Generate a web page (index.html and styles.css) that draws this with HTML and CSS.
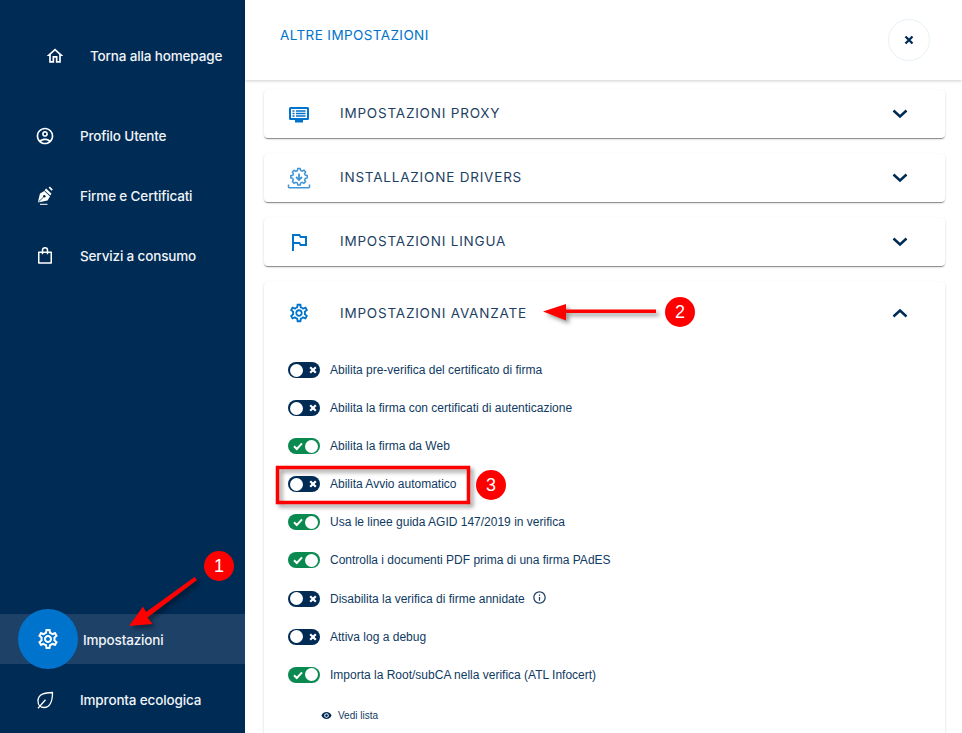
FILE: index.html
```html
<!DOCTYPE html>
<html lang="it">
<head>
<meta charset="utf-8">
<title>Altre impostazioni</title>
<link rel="stylesheet" href="styles.css">
</head>
<body>
<svg class="defs" aria-hidden="true">
  <defs>
    <symbol id="gear" viewBox="0 0 24 24"><path d="M19.43 12.98c.04-.32.07-.64.07-.98 0-.34-.03-.66-.07-.98l2.11-1.65c.19-.15.24-.42.12-.64l-2-3.46c-.09-.16-.26-.25-.44-.25-.06 0-.12.01-.17.03l-2.49 1c-.52-.4-1.08-.73-1.69-.98l-.38-2.65C14.46 2.18 14.25 2 14 2h-4c-.25 0-.46.18-.49.42l-.38 2.65c-.61.25-1.17.59-1.69.98l-2.49-1c-.06-.02-.12-.03-.18-.03-.17 0-.34.09-.43.25l-2 3.46c-.13.22-.07.49.12.64l2.11 1.65c-.04.32-.07.65-.07.98 0 .33.03.66.07.98l-2.11 1.65c-.19.15-.24.42-.12.64l2 3.46c.09.16.26.25.44.25.06 0 .12-.01.17-.03l2.49-1c.52.4 1.08.73 1.69.98l.38 2.65c.03.24.24.42.49.42h4c.25 0 .46-.18.49-.42l.38-2.65c.61-.25 1.17-.59 1.69-.98l2.49 1c.06.02.12.03.18.03.17 0 .34-.09.43-.25l2-3.46c.12-.22.07-.49-.12-.64l-2.11-1.65zm-1.98-1.71c.04.31.05.52.05.73 0 .21-.02.43-.05.73l-.14 1.13.89.7 1.08.84-.7 1.21-1.27-.51-1.04-.42-.9.68c-.43.32-.84.56-1.25.73l-1.06.43-.16 1.13-.2 1.35h-1.4l-.19-1.35-.16-1.13-1.06-.43c-.43-.18-.83-.41-1.23-.71l-.91-.7-1.06.43-1.27.51-.7-1.21 1.08-.84.89-.7-.14-1.13c-.03-.31-.05-.54-.05-.74s.02-.43.05-.73l.14-1.13-.89-.7-1.08-.84.7-1.21 1.27.51 1.04.42.9-.68c.43-.32.84-.56 1.25-.73l1.06-.43.16-1.13.2-1.35h1.39l.19 1.35.16 1.13 1.06.43c.43.18.83.41 1.23.71l.91.7 1.06-.43 1.27-.51.7 1.21-1.07.85-.89.7.14 1.13zM12 8c-2.21 0-4 1.79-4 4s1.79 4 4 4 4-1.79 4-4-1.79-4-4-4zm0 6c-1.1 0-2-.9-2-2s.9-2 2-2 2 .9 2 2-.9 2-2 2z"/></symbol>
    <symbol id="chev" viewBox="0 0 16 16"><path d="M1.500 4.500 8 10.500 14.500 4.500" fill="none" stroke="currentColor" stroke-width="2.500"/></symbol>
    <symbol id="off" viewBox="0 0 10 10"><path d="M2.200 2.200 7.800 7.800M7.800 2.200 2.200 7.800" fill="none" stroke="#fff" stroke-width="2.200"/></symbol>
    <symbol id="on" viewBox="0 0 10 10"><path d="M1 5.200 3.800 8 9 2.400" fill="none" stroke="#fff" stroke-width="2"/></symbol>
  </defs>
</svg>

<div class="app">
  <aside class="sidebar">
    <a class="home-row">
      <svg class="side-icon" viewBox="0 0 24 24"><path d="M12 5.690l5 4.500V18h-2v-6H9v6H7v-7.810l5-4.500M12 3L2 12h3v8h6v-6h2v6h6v-8h3L12 3z"/></svg>
      <span>Torna alla homepage</span>
    </a>
    <nav class="side-nav">
      <a class="side-row">
        <svg class="side-icon" viewBox="0 0 24 24"><path d="M12 2C6.480 2 2 6.480 2 12s4.480 10 10 10 10-4.480 10-10S17.520 2 12 2zM7.350 18.500C8.660 17.560 10.260 17 12 17s3.340.56 4.650 1.500c-1.310.94-2.910 1.500-4.650 1.500s-3.340-.56-4.650-1.500zm10.790-1.380C16.450 15.800 14.320 15 12 15s-4.450.8-6.140 2.120C4.700 15.730 4 13.950 4 12c0-4.420 3.580-8 8-8s8 3.580 8 8c0 1.950-.7 3.730-1.860 5.120zM12 6c-1.930 0-3.500 1.570-3.500 3.500S10.070 13 12 13s3.500-1.570 3.500-3.500S13.930 6 12 6zm0 5c-.83 0-1.500-.67-1.500-1.500S11.170 8 12 8s1.500.67 1.500 1.500S12.830 11 12 11z"/></svg>
        <span>Profilo Utente</span>
      </a>
      <a class="side-row">
        <svg class="side-icon" viewBox="0 0 20 20"><path d="M2.800 16.600 5 7.500 9.300 5 15 10.600 12.500 14.600z"/><path d="M9.500 4.200 11.200 2.500 16.500 7.800 15.300 9.600z"/><circle cx="9.300" cy="10.200" r="1.300" fill="#002b55"/><path d="M3.400 16 8.600 11" fill="none" stroke="#002b55" stroke-width=".8"/><path d="M14.200 1.200 17.200 4.200" fill="none" stroke="#fff" stroke-width="1.700"/><path d="M5 18.300h7.500" fill="none" stroke="#fff" stroke-width="1"/></svg>
        <span>Firme e Certificati</span>
      </a>
      <a class="side-row">
        <svg class="side-icon" viewBox="0 0 24 24"><path d="M4.500 7.500h15v13h-15zM9 10V5a3 3 0 0 1 6 0v5" fill="none" stroke="#fff" stroke-width="1.800" stroke-linejoin="round"/></svg>
        <span>Servizi a consumo</span>
      </a>
    </nav>
    <div class="side-bottom">
      <a class="side-row active-row">
        <span class="active-disc"><svg class="active-gear"><use href="#gear"/></svg></span>
        <span class="active-label">Impostazioni</span>
      </a>
      <a class="side-row">
        <svg class="side-icon" viewBox="0 0 20 20"><path d="M17.500 2.500C10 2.500 3 4 3 11c0 4 2.500 6.500 6 6.500 6 0 8.500-6.500 8.500-15zM3 18.200 10.500 9.800" fill="none" stroke="#fff" stroke-width="1.300" stroke-linejoin="round"/></svg>
        <span>Impronta ecologica</span>
      </a>
    </div>
  </aside>

  <main class="main">
    <header class="top-bar">
      <h1 class="page-title">ALTRE IMPOSTAZIONI</h1>
      <button class="close-btn" aria-label="Chiudi">
        <svg class="close-icon" viewBox="0 0 10 10"><path d="M1.500 1.500 8.500 8.500M8.500 1.500 1.500 8.500" fill="none" stroke="currentColor" stroke-width="2.300"/></svg>
      </button>
    </header>

    <div class="content">
      <section class="card">
        <div class="card-head">
          <svg class="card-icon" viewBox="0 0 24 24"><path d="M3.500 5h17A1.500 1.500 0 0 1 22 6.500v10a1.500 1.500 0 0 1-1.500 1.500h-17A1.500 1.500 0 0 1 2 16.500v-10A1.500 1.500 0 0 1 3.500 5zM4 7v9h16V7z" fill-rule="evenodd"/><path d="M5.500 8.300h2v1.400h-2zM9 8.300h9.500v1.400H9zM5.500 10.800h2v1.400h-2zM9 10.800h9.500v1.400H9zM5.500 13.300h2v1.400h-2zM9 13.300h9.500v1.400H9zM8 18h8v2.600H8z"/></svg>
          <h2 class="card-title">IMPOSTAZIONI PROXY</h2>
          <svg class="chevron"><use href="#chev"/></svg>
        </div>
      </section>
      <section class="card">
        <div class="card-head">
          <svg class="card-icon card-icon-soft" viewBox="0 0 24 24"><path d="M10.800 2.500h2.400l.4 1.900 1.600.7 1.700-1 1.700 1.700-1 1.700.7 1.600 1.900.4v2.400l-1.900.4-.7 1.600 1 1.700-1.700 1.700-1.700-1-1.600.7-.4 1.900h-2.400l-.4-1.900-1.600-.7-1.700 1-1.700-1.700 1-1.700-.7-1.600-1.900-.4V9.700l1.900-.4.7-1.600-1-1.700 1.700-1.700 1.700 1 1.600-.7z" fill="none" stroke="currentColor" stroke-width="1.500"/><path d="M12 7.500v6M9 11l3 3 3-3" fill="none" stroke="currentColor" stroke-width="1.800"/><path d="M1.500 18.500v2.500a.8.8 0 0 0 .8.8h19.400a.8.8 0 0 0 .8-.8v-2.500" fill="none" stroke="currentColor" stroke-width="1.500"/></svg>
          <h2 class="card-title">INSTALLAZIONE DRIVERS</h2>
          <svg class="chevron"><use href="#chev"/></svg>
        </div>
      </section>
      <section class="card">
        <div class="card-head">
          <svg class="card-icon" viewBox="0 0 24 24"><path d="M14 6l-1-2H5v17h2v-7h5l1 2h7V6h-6zm4 8h-4l-1-2H7V6h5l1 2h5v6z"/></svg>
          <h2 class="card-title">IMPOSTAZIONI LINGUA</h2>
          <svg class="chevron"><use href="#chev"/></svg>
        </div>
      </section>
      <section class="card card-open">
        <div class="card-head card-head-open">
          <svg class="card-icon card-icon-gear"><use href="#gear"/></svg>
          <h2 class="card-title">IMPOSTAZIONI AVANZATE</h2>
          <svg class="chevron chevron-up"><use href="#chev"/></svg>
        </div>
        <ul class="options">
          <li class="option"><span class="toggle"><i class="knob"></i><svg class="mark"><use href="#off"/></svg></span>Abilita pre-verifica del certificato di firma</li>
          <li class="option"><span class="toggle"><i class="knob"></i><svg class="mark"><use href="#off"/></svg></span>Abilita la firma con certificati di autenticazione</li>
          <li class="option"><span class="toggle toggle-on"><svg class="mark"><use href="#on"/></svg><i class="knob"></i></span>Abilita la firma da Web</li>
          <li class="option"><span class="toggle"><i class="knob"></i><svg class="mark"><use href="#off"/></svg></span>Abilita Avvio automatico</li>
          <li class="option"><span class="toggle toggle-on"><svg class="mark"><use href="#on"/></svg><i class="knob"></i></span>Usa le linee guida AGID 147/2019 in verifica</li>
          <li class="option"><span class="toggle toggle-on"><svg class="mark"><use href="#on"/></svg><i class="knob"></i></span>Controlla i documenti PDF prima di una firma PAdES</li>
          <li class="option"><span class="toggle"><i class="knob"></i><svg class="mark"><use href="#off"/></svg></span>Disabilita la verifica di firme annidate
            <svg class="info" viewBox="0 0 24 24"><path d="M11 7h2v2h-2zm0 4h2v6h-2zm1-9C6.480 2 2 6.480 2 12s4.480 10 10 10 10-4.480 10-10S17.520 2 12 2zm0 18c-4.410 0-8-3.590-8-8s3.590-8 8-8 8 3.590 8 8-3.590 8-8 8z"/></svg></li>
          <li class="option"><span class="toggle"><i class="knob"></i><svg class="mark"><use href="#off"/></svg></span>Attiva log a debug</li>
          <li class="option"><span class="toggle toggle-on"><svg class="mark"><use href="#on"/></svg><i class="knob"></i></span>Importa la Root/subCA nella verifica (ATL Infocert)</li>
        </ul>
        <a class="see-list">
          <svg class="eye" viewBox="0 0 24 24"><path d="M12 4.500C7 4.500 2.730 7.610 1 12c1.730 4.390 6 7.500 11 7.500s9.270-3.110 11-7.500c-1.730-4.390-6-7.500-11-7.500zM12 17c-2.760 0-5-2.240-5-5s2.240-5 5-5 5 2.240 5 5-2.240 5-5 5zm0-8c-1.660 0-3 1.340-3 3s1.340 3 3 3 3-1.340 3-3-1.340-3-3-3z"/></svg>
          Vedi lista
        </a>
      </section>
    </div>
  </main>
</div>

<svg class="arrows" viewBox="0 0 962 733" aria-hidden="true">
  <rect class="callout-box" x="277.500" y="467.500" width="191" height="35"/>
  <path class="callout-arrow" d="M656 309.500V313H566V320.500L543 311.500 566 304V309.500z"/>
  <path class="callout-arrow" d="M194.500 577 197 580 147.500 617.500 152.500 624 129 626 143 606.500 146 612z"/>
</svg>
<span class="badge badge-one">1</span>
<span class="badge badge-two">2</span>
<span class="badge badge-three">3</span>
</body>
</html>
```

FILE: styles.css
```css
* { box-sizing: border-box; }

html, body {
  margin: 0;
  height: 733px;
  overflow: hidden;
  background: #fff;
}

body { position: relative; }

.defs { position: absolute; width: 0; height: 0; }

.app {
  display: flex;
  width: 962px;
  height: 733px;
}

/* Sidebar */
.sidebar {
  flex: 0 0 245px;
  display: flex;
  flex-direction: column;
  padding-top: 26px;
  padding-bottom: 3px;
  background: #002b55;
  color: #f0f4f8;
  font: 500 13.5px Inter, "Liberation Sans", sans-serif;
  letter-spacing: -0.15px;
}

.side-icon { width: 20px; height: 20px; fill: #fff; flex: none; }

.home-row {
  display: flex;
  align-items: center;
  height: 60px;
  padding-left: 45px;
  gap: 25px;
}

.side-nav {
  display: flex;
  flex-direction: column;
  margin-top: 20px;
}

.side-row {
  display: flex;
  align-items: center;
  height: 60px;
  padding-left: 35px;
  gap: 25px;
}

.side-bottom {
  margin-top: auto;
  display: flex;
  flex-direction: column;
  gap: 6px;
}

.active-row {
  position: relative;
  height: 50px;
  padding-left: 83px;
  background: #1e4168;
}

.active-disc {
  position: absolute;
  left: 18px;
  top: -5px;
  width: 60px;
  height: 60px;
  border-radius: 50%;
  background: #0073cc;
  display: flex;
  align-items: center;
  justify-content: center;
}

.active-gear { width: 24px; height: 24px; fill: #fff; }

.active-label { padding-top: 1px; }

/* Main */
.main {
  flex: 1;
  min-width: 0;
  display: flex;
  flex-direction: column;
}

.top-bar {
  flex: 0 0 80px;
  display: flex;
  align-items: flex-start;
  justify-content: space-between;
  padding: 19px 32px 0 35px;
  background: #fff;
  box-shadow: 0 1px 3px rgba(0, 0, 0, 0.2);
  position: relative;
}

.page-title {
  margin: 8px 0 0;
  font: 400 13.5px/16px Inter, Roboto, sans-serif;
  letter-spacing: 0.4px;
  color: #0073cc;
}

.close-btn {
  width: 42px;
  height: 42px;
  padding: 0;
  border: 1px solid #e6f1f8;
  border-radius: 50%;
  background: #fff;
  color: #002b55;
  display: flex;
  align-items: center;
  justify-content: center;
}

.close-icon { width: 10px; height: 10px; }

.content {
  display: flex;
  flex-direction: column;
  gap: 16px;
  padding: 10px 17px 0 19px;
}

.card {
  background: #fff;
  border-radius: 4px;
  box-shadow: 0 2px 1px -1px rgba(0, 0, 0, 0.3), 0 1px 1px 0 rgba(0, 0, 0, 0.16), 0 1px 3px 0 rgba(0, 0, 0, 0.12);
}

.card-open { padding-bottom: 40px; }

.card-head {
  display: flex;
  align-items: center;
  height: 48px;
  padding: 0 37px 0 23px;
}

.card-head-open { height: 62px; }

.card-icon {
  width: 24px;
  height: 24px;
  flex: none;
  margin-right: 29px;
  fill: #0073cc;
  color: #0073cc;
}

.card-icon-gear {
  width: 22px;
  height: 22px;
  margin-left: 1px;
  margin-right: 30px;
}

.card-icon-soft { color: #3f95d6; }

.card-title {
  flex: 1;
  margin: 0 0 2px;
  font: 400 13.5px/16px Inter, Roboto, sans-serif;
  letter-spacing: 0.8px;
  color: #1d3f63;
}

.card-head-open .card-title { margin-bottom: 0; }

.chevron { width: 16px; height: 16px; color: #002b55; flex: none; }

.chevron-up { transform: scaleY(-1); }

.options {
  list-style: none;
  margin: 0;
  padding: 7px 0 0 24px;
  display: flex;
  flex-direction: column;
}

.option {
  display: flex;
  align-items: center;
  height: 38.08px;
  font: 400 12px "Liberation Sans", Arial, sans-serif;
  color: #0f3a63;
}

.toggle {
  flex: none;
  display: flex;
  align-items: center;
  justify-content: space-between;
  width: 32px;
  height: 16px;
  margin-right: 10px;
  padding: 0 2px 0 2px;
  border-radius: 8px;
  background: #002b55;
}

.toggle-on {
  background: #0a8a50;
  padding: 0 2px 0 5px;
}

.knob {
  width: 13px;
  height: 13px;
  border-radius: 50%;
  background: #fff;
}

.mark { width: 10px; height: 10px; }

.info { width: 15px; height: 15px; margin-left: 7px; margin-top: -2px; fill: #1d3f63; }

.see-list {
  display: flex;
  align-items: center;
  gap: 6px;
  margin: 13px 0 0 57px;
  height: 18px;
  font: 400 10px "Liberation Sans", Arial, sans-serif;
  color: #0f3a63;
}

.eye { width: 11px; height: 11px; fill: #002b55; }

/* Annotations laid over the screenshot */
.arrows {
  position: absolute;
  left: 0;
  top: 0;
  width: 962px;
  height: 733px;
  filter: drop-shadow(3px 3px 2px rgba(0, 0, 0, 0.4));
  pointer-events: none;
}

.callout-box { fill: none; stroke: #f00; stroke-width: 3.500; }

.callout-arrow { fill: #f00; }

.badge {
  position: absolute;
  width: 30px;
  height: 30px;
  border-radius: 50%;
  background: #f00;
  color: #fff;
  font: 400 18px/30px "Liberation Sans", Arial, sans-serif;
  text-align: center;
}

.badge-one { left: 204px; top: 551px; }
.badge-two { left: 665px; top: 297px; }
.badge-three { left: 476px; top: 470px; }
```
